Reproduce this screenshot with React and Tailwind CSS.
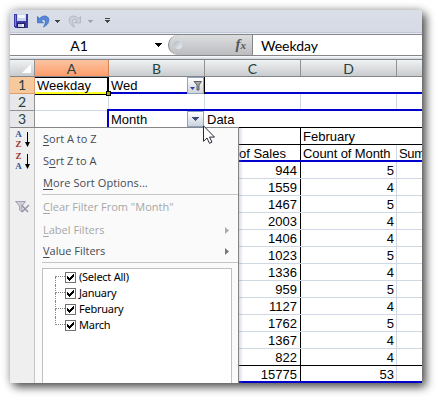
import React from 'react';

const rows = [
  ['944', '5'], ['1559', '4'], ['1467', '5'], ['2003', '4'], ['1406', '4'], ['1023', '5'],
  ['1336', '4'], ['959', '5'], ['1127', '4'], ['1762', '5'], ['1367', '4'], ['822', '4'],
];

function SaveIcon() {
  return (
    <svg width="14" height="14" viewBox="0 0 14 14" shapeRendering="crispEdges">
      <path d="M0 0h14v14H1l-1-1z" fill="#3d3aa8" />
      <path d="M1 1h1v11H1z" fill="#7b82dc" />
      <path d="M3 0h9v7H3z" fill="#c9d5f3" />
      <path d="M4 1h7v3H4z" fill="#f3f7ff" />
      <path d="M3 9h8v5H3z" fill="#24215f" />
      <path d="M4 10h4v3H4z" fill="#c4cbe0" />
      <path d="M8 10h2v3H8z" fill="#eef2fb" />
    </svg>
  );
}

function Undo({ stroke, fill, flip }) {
  return (
    <svg width="13" height="13" viewBox="0 0 13 13" className={flip ? '-scale-x-100' : ''}>
      <path d="M.5 1.500v6.300h6L4.300 5.700c1.400-1.700 3.600-1.700 4 .3.400 2-.6 3.800-1.800 6 3.800-1.600 5.700-4.700 5.300-7.700C11.200.3 5.500-.2 2.600 3.600z" fill={fill} stroke={stroke} strokeWidth=".7" />
    </svg>
  );
}

function Caret({ color = '#444', className = '' }) {
  return (
    <svg width="5" height="3" viewBox="0 0 5 3" className={className} shapeRendering="crispEdges">
      <path d="M0 0h5L2.500 3z" fill={color} />
    </svg>
  );
}

function SortIcon({ top, bottom, topClass, bottomClass }) {
  return (
    <div className="flex h-[20px] w-[17px] items-center">
      <div className="flex w-[9px] flex-col items-center font-['Liberation_Serif',serif] text-[9px] leading-[10px] font-bold">
        <span className={topClass}>{top}</span>
        <span className={bottomClass}>{bottom}</span>
      </div>
      <svg width="5" height="15" viewBox="0 0 5 15" className="ml-[2px]">
        <path d="M2 0h1v10h2l-2.500 5L0 10h2z" fill="#000" />
      </svg>
    </div>
  );
}

function ColHead({ children, className }) {
  return (
    <div className={`flex shrink-0 items-center justify-center overflow-hidden border-r border-[#929292] bg-linear-to-b from-[#f0f2f3] to-[#c9cccf] text-[#27413e] ${className}`}>
      {children}
    </div>
  );
}

function RowHead({ children, className }) {
  return (
    <div className={`flex w-[25px] shrink-0 items-center justify-center border-r font-[Lato,sans-serif] text-[14px] leading-[16px] text-[#27413e] ${className}`}>
      {children}
    </div>
  );
}

function MenuItem({ icon, children, disabled, arrow, className }) {
  return (
    <div className={`flex items-center ${disabled ? 'text-[#a7a7a7]' : 'text-[#444a55]'} ${className}`}>
      <div className="flex w-[25px] shrink-0 justify-center">{icon}</div>
      <div className="ml-[8px] grow whitespace-nowrap">{children}</div>
      {arrow && (
        <svg width="4" height="7" viewBox="0 0 4 7" className="mr-[9px]">
          <path d="M0 0l4 3.500L0 7z" fill={disabled ? '#aaa' : '#777'} />
        </svg>
      )}
    </div>
  );
}

function U({ children }) {
  return <span className="underline decoration-1 underline-offset-2">{children}</span>;
}

function Check({ label, last, first }) {
  return (
    <div className="flex h-[16px] items-center">
      <div className="flex h-full w-[10px] flex-col">
        <div className={`h-[8px] border-b border-dotted border-b-[#888] ${first ? '' : 'border-l border-l-[#888]'}`} />
        <div className={`h-[8px] ${last ? '' : 'border-l border-dotted border-[#888]'}`} />
      </div>
      <svg width="11" height="11" viewBox="0 0 11 11" shapeRendering="crispEdges">
        <path d="M.5.5h10v10H.5z" fill="#fff" stroke="#707070" />
        <path d="M2 4h1v1h1v1h1v-1h1v-1h1v-1h1v-1h1v3h-1v1h-1v1h-1v1h-1v1h-1v-1h-1v-1h-1z" fill="#000" />
      </svg>
      <span className="ml-[3px] whitespace-nowrap">{label}</span>
    </div>
  );
}

function Menu() {
  return (
    <div className="absolute top-[117px] left-0 h-[256px] w-[229px] overflow-hidden border-t border-r border-[#868686] bg-[linear-gradient(to_right,#efefef_24px,#c5c5c5_24px,#c5c5c5_25px,#fafafa_25px)] font-['Open_Sans',sans-serif] text-[11px]">
      <MenuItem className="h-[22px]" icon={<SortIcon top="A" bottom="Z" topClass="text-[#31549b]" bottomClass="text-[#963333]" />}><U>S</U>ort A to Z</MenuItem>
      <MenuItem className="h-[22px]" icon={<SortIcon top="Z" bottom="A" topClass="text-[#963333]" bottomClass="text-[#31549b]" />}>S<U>o</U>rt Z to A</MenuItem>
      <MenuItem className="h-[22px] tracking-[0.080px]"><U>M</U>ore Sort Options...</MenuItem>
      <div className="ml-[32px] h-px bg-[#c5c5c5]" />
      <MenuItem
        className="h-[24px]"
        disabled
        icon={
          <svg width="15" height="12" viewBox="0 0 15 12">
            <path d="M.5.500h10L7 5v6L4.500 9V5z" fill="#cfced8" stroke="#a3a1b2" />
            <path d="M6.500 4l6.500 7M14 4l-7 7" stroke="#9694a9" strokeWidth="1.500" />
          </svg>
        }
      ><U>C</U>lear Filter From "Month"</MenuItem>
      <MenuItem className="h-[22px]" disabled arrow><U>L</U>abel Filters</MenuItem>
      <MenuItem className="h-[21px]" arrow><U>V</U>alue Filters</MenuItem>
      <div className="ml-[32px] h-px bg-[#c5c5c5]" />
      <div className="mt-[5px] ml-[32px] h-[140px] w-[190px] border border-[#c0c0c0] bg-white pl-[12px] font-['Noto_Sans',sans-serif] text-[11px] tracking-[-0.250px] text-black">
        <Check label="(Select All)" first />
        <Check label="January" />
        <Check label="February" />
        <Check label="March" last />
      </div>
    </div>
  );
}

export default function App() {
  return (
    <div className="h-[401px] w-[440px] overflow-hidden bg-white pt-[10px] pl-[10px] font-['Liberation_Sans',Arial,sans-serif] text-[13px] text-black">
      <div className="relative flex h-[373px] w-[412px] flex-col rounded-t-[3px] bg-white shadow-[4px_4px_10px_rgba(0,0,0,0.65),0_0_10px_rgba(0,0,0,0.25)]">
        <div className="flex h-[23px] shrink-0 items-center rounded-t-[3px] border-b border-[#c0c7d6] bg-linear-to-b from-[#dadee7] to-[#d5dae5] pl-[4px]">
          <SaveIcon />
          <div className="ml-[9px]"><Undo fill="#5587d6" stroke="#3562b4" /></div>
          <Caret className="ml-[5px]" />
          <div className="ml-[8px]"><Undo fill="#c9ced9" stroke="#a5acba" flip /></div>
          <Caret className="ml-[7px]" color="#a0a5af" />
          <svg width="5" height="6" viewBox="0 0 5 6" className="ml-[12px]" shapeRendering="crispEdges">
            <path d="M0 0h5v1H0zM0 2h5L2.500 5z" fill="#444" />
          </svg>
        </div>
        <div className="h-px shrink-0 bg-[#e8ecf4]" />
        <div className="flex h-[22px] shrink-0 border-y border-[#868686] font-[Lato,Carlito,sans-serif] text-[14px] leading-[21px]">
          <div className="w-[138px] text-center">A1</div>
          <div className="flex w-[20px] items-center">
            <svg width="7" height="4" viewBox="0 0 7 4" className="ml-[7px]" shapeRendering="crispEdges"><path d="M0 0h7L3.500 4z" fill="#000" /></svg>
          </div>
          <div className="flex w-[85px] items-center justify-between rounded-l-full border-r border-l border-[#868686] bg-linear-to-b from-[#dcdddf] to-[#bcbdc0] pr-[6px] pl-[5px]">
            <div className="size-[8px] rounded-full bg-linear-to-br from-[#aeb7c2] to-[#eef2f7]" />
            <div className="font-['Liberation_Serif',serif] text-[15px] font-bold text-[#555] italic">f<span className="text-[11px]">x</span></div>
          </div>
          <div className="pl-[8px]">Weekday</div>
        </div>
        <div className="h-[3px] shrink-0 bg-linear-to-b from-white to-[#ced6e5]" />
        <div className="flex h-[18px] shrink-0 border-y border-[#868686] font-[Lato,sans-serif] text-[14px]">
          <ColHead className="w-[25px] !justify-end"><div className="mr-[3px] size-0 border-b-[9px] border-l-[9px] border-b-white border-l-transparent" /></ColHead>
          <div className="flex w-[74px] shrink-0 items-center justify-center border-r border-[#d58352] bg-linear-to-b from-[#fbc4a0] to-[#fd9c6c] text-[#27413e]">A</div>
          <ColHead className="w-[96px]">B</ColHead>
          <ColHead className="w-[96px]">C</ColHead>
          <ColHead className="w-[96px]">D</ColHead>
          <ColHead className="w-[25px] border-r-0"> </ColHead>
        </div>
        <div className="flex h-[17px] shrink-0">
          <RowHead className="border-b border-[#e09b6d] bg-[#f5c99c]">1</RowHead>
          <div className="w-[73px] border-t border-r border-b-2 border-t-black border-r-black border-b-[#ffff20] pl-[2px] leading-[15px]">Weekday</div>
          <div className="flex w-[97px] border-r border-l border-black">
            <div className="grow border-b-2 border-[#0000cc] pl-[2px] leading-[17px]">Wed</div>
            <div className="flex h-[17px] w-[17px] items-center justify-center border border-[#8ba3c7] bg-linear-to-b from-white to-[#d0d3d8]">
              <svg width="12" height="10" viewBox="0 0 12 10"><path d="M0 6h5L2.500 9z" fill="#3145a0" /><path d="M4 .5h7.500L9 4v5H7V4z" fill="#aaa" stroke="#444" strokeWidth=".8" /></svg>
            </div>
          </div>
          <div className="w-[217px] border-b-2 border-[#0000cc]" />
        </div>
        <div className="flex h-[17px] shrink-0">
          <RowHead className="border-b border-[#929292] bg-[#e6e8eb]">2</RowHead>
          <div className="w-[72px] border-t border-b border-t-black border-b-[#d0d7e5]" />
          <div className="flex grow border-b-2 border-[#0000cc]">
            <div className="w-[2px] border-r border-[#d0d7e5]" />
            <div className="w-[96px] border-r border-[#d0d7e5]" />
            <div className="w-[96px] border-r border-[#d0d7e5]" />
            <div className="w-[96px] border-r border-[#d0d7e5]" />
          </div>
        </div>
        <div className="flex h-[16px] shrink-0">
          <RowHead className="border-[#929292] bg-[#e6e8eb]">3</RowHead>
          <div className="w-[72px]" />
          <div className="flex w-[97px] border-l-2 border-[#0000cc]">
            <div className="grow pl-[2px] leading-[17px]">Month</div>
            <div className="flex h-[16px] w-[17px] items-center justify-center border border-[#8ba3c7] bg-linear-to-b from-white to-[#cbd3de]">
              <svg width="7" height="4" viewBox="0 0 7 4" shapeRendering="crispEdges"><path d="M0 0h7L3.500 4z" fill="#3d4c7c" /></svg>
            </div>
          </div>
          <div className="pl-[3px] leading-[17px]">Data</div>
        </div>
        <div className="flex shrink-0 flex-col pl-[228px]">
          <div className="flex h-[18px] border-y border-black">
            <div className="w-[63px] border-r border-black" />
            <div className="pl-[2px] leading-[17px]">February</div>
          </div>
          <div className="flex h-[17px] border-b-2 border-[#0000cc] leading-[17px] whitespace-nowrap">
            <div className="w-[63px] border-r border-black pl-px">of Sales</div>
            <div className="w-[96px] border-r border-[#d0d7e5] pl-[2px] tracking-[-0.100px]">Count of Month</div>
            <div className="w-[25px] overflow-hidden pl-[2px] tracking-[-0.300px]">Sum</div>
          </div>
          {rows.map(([sales, count], i) => (
            <div key={i} className={`flex h-[17px] border-b text-right leading-[17px] ${i === 11 ? 'border-black' : 'border-[#d0d7e5]'}`}>
              <div className="w-[63px] border-r border-black pr-[3px]">{sales}</div>
              <div className="w-[96px] border-r border-[#d0d7e5] pr-[2px]">{count}</div>
            </div>
          ))}
          <div className="flex h-[17px] border-b-2 border-[#0000cc] text-right leading-[17px]">
            <div className="w-[63px] border-r border-black pr-[3px]">15775</div>
            <div className="w-[96px] border-r border-[#d0d7e5] pr-[2px]">53</div>
          </div>
        </div>
        <Menu />
        <div className="absolute top-[118px] left-[229px] h-[255px] w-[4px] bg-linear-to-r from-[#8078a04d] to-transparent" />
        <svg width="5" height="5" viewBox="0 0 5 5" className="absolute top-[81px] left-[96px]" shapeRendering="crispEdges"><path d="M0 0h5v5H0z" fill="#000" /><path d="M1 1h3v3H1z" fill="#a5a520" /></svg>
        <svg width="12" height="19" viewBox="0 0 12 19" className="absolute top-[115px] left-[193px]">
          <path d="M.5.800v15.500l3.500-3.300 2.500 5.300 2.500-1.200-2.500-5h5z" fill="#fff" stroke="#27293a" />
        </svg>
      </div>
    </div>
  );
}
